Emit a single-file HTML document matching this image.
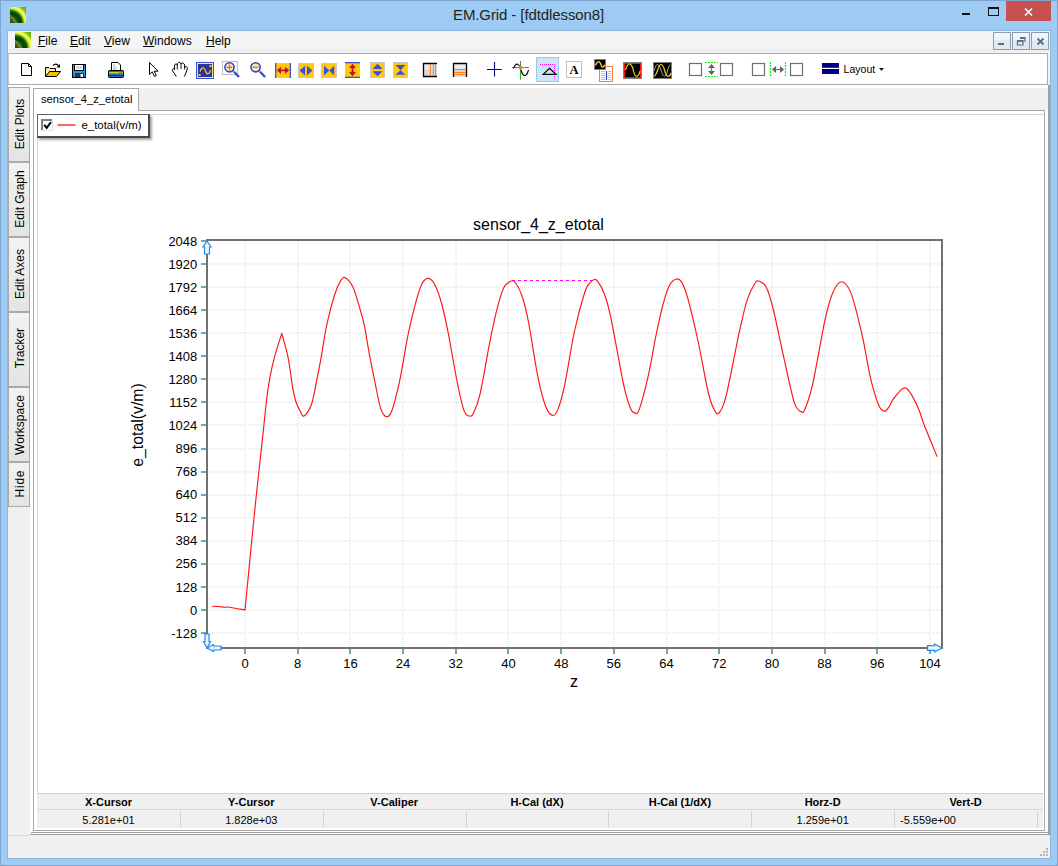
<!DOCTYPE html>
<html><head><meta charset="utf-8">
<style>
*{margin:0;padding:0;box-sizing:border-box}
html,body{width:1058px;height:866px;overflow:hidden}
body{position:relative;background:#9ecbf3;font-family:"Liberation Sans",sans-serif;color:#000}
.a{position:absolute}
.t{position:absolute;white-space:nowrap;line-height:1}
</style></head><body>
<!-- outer frame border -->
<div class="a" style="left:0;top:0;width:1058px;height:866px;border:1px solid #7ea5cb"></div>
<!-- title icon -->

<div class="t" style="left:453px;top:7px;font-size:15px;color:#1f1f1f;letter-spacing:-0.1px">EM.Grid - [fdtdlesson8]</div>
<!-- window buttons -->
<div class="a" style="left:962px;top:13px;width:8px;height:2px;background:#111"></div>
<div class="a" style="left:988px;top:7px;width:11px;height:9px;border:1px solid #111;border-top-width:2px"></div>
<div class="a" style="left:1006px;top:1px;width:45px;height:20px;background:#c75050"></div>
<svg class="a" style="left:1006px;top:1px" width="45" height="20"><path d="M19 7.5 L26 14.5 M26 7.5 L19 14.5" stroke="#fff" stroke-width="1.6"/></svg>

<!-- client area -->
<div class="a" style="left:7px;top:30px;width:1044px;height:829px;background:#8db6dd"></div>
<div class="a" style="left:8px;top:31px;width:1042px;height:827px;background:#f0f0f0"></div>
<!-- menu bar -->
<div class="a" style="left:8px;top:31px;width:1042px;height:18px;background:#f4f5f7"></div>
<div class="a" style="left:8px;top:49px;width:1042px;height:1px;background:#e8e9ea"></div>
<div class="a" style="left:8px;top:50px;width:1042px;height:2px;background:#efefef"></div>
<div class="a" style="left:8px;top:52px;width:1042px;height:1px;background:#f4f4f4"></div>

<div class="t" style="left:38px;top:35px;font-size:12px;color:#000"><u>F</u>ile</div>
<div class="t" style="left:70px;top:35px;font-size:12px;color:#000"><u>E</u>dit</div>
<div class="t" style="left:104px;top:35px;font-size:12px;color:#000"><u>V</u>iew</div>
<div class="t" style="left:143px;top:35px;font-size:12px;color:#000"><u>W</u>indows</div>
<div class="t" style="left:206px;top:35px;font-size:12px;color:#000"><u>H</u>elp</div>
<!-- MDI buttons -->


<!-- toolbar -->
<div class="a" style="left:8px;top:53px;width:1040px;height:32px;border:1px solid #aaa;border-left-color:#c8c8c8;background:#fff"></div>
<!--TOOLS--><svg class="a" style="left:0;top:0" width="1058" height="90">
<defs>
<radialGradient id="sw" cx="0" cy="1" r="1.35">
<stop offset="0" stop-color="#3a3a20"/><stop offset="0.25" stop-color="#4a7a10"/><stop offset="0.42" stop-color="#063c06"/><stop offset="0.55" stop-color="#0a5a0a"/><stop offset="0.68" stop-color="#d8f040"/><stop offset="0.76" stop-color="#ffff60"/><stop offset="0.86" stop-color="#90c810"/><stop offset="1" stop-color="#6aa800"/>
</radialGradient>
<linearGradient id="gg" x1="0" y1="0" x2="0" y2="1"><stop offset="0" stop-color="#f0f0f0"/><stop offset="0.5" stop-color="#e8e8e8"/><stop offset="0.5" stop-color="#d6d6d6"/><stop offset="1" stop-color="#dcdcdc"/></linearGradient>
<linearGradient id="mb" x1="0" y1="0" x2="0" y2="1"><stop offset="0" stop-color="#f4f8fc"/><stop offset="0.45" stop-color="#eaf2fa"/><stop offset="0.5" stop-color="#dde9f6"/><stop offset="1" stop-color="#dfeaf7"/></linearGradient>
</defs>
<rect x="10" y="7" width="16" height="16" fill="url(#sw)"/>
<path d="M10.5 15.5L16 22.5" stroke="#fff" stroke-width="0.9" stroke-dasharray="1 1" opacity="0.8"/>
<rect x="15" y="32" width="16" height="16" fill="url(#sw)"/>
<path d="M15.5 40.5L21 47.5" stroke="#fff" stroke-width="0.9" stroke-dasharray="1 1" opacity="0.8"/>
<rect x="993.5" y="32.5" width="17" height="17" fill="url(#mb)" stroke="#8c9cab"/>
<rect x="1012.5" y="32.5" width="17" height="17" fill="url(#mb)" stroke="#8c9cab"/>
<rect x="1031.5" y="32.5" width="17" height="17" fill="url(#mb)" stroke="#8c9cab"/>
<rect x="998" y="43" width="6" height="2" fill="#5e6e7e"/>
<path d="M1020.5 38.5h4.5v3.5 M1017.5 41h5.5v4h-5.5z" fill="none" stroke="#5e6e7e" stroke-width="1.2"/><rect x="1020" y="37" width="5.5" height="1.8" fill="#5e6e7e"/><rect x="1017" y="40" width="6.5" height="1.8" fill="#5e6e7e"/>
<path d="M1037.5 38.5L1043.5 44.5M1043.5 38.5L1037.5 44.5" stroke="#5e6e7e" stroke-width="1.8"/>
<path d="M21.5 63.5H28.5L31.5 66.5V75.5H21.5Z" fill="#fff" stroke="#000"/><path d="M28.5 63.5V66.5H31.5" fill="none" stroke="#000"/>
<path d="M45.5 76.5V67.5H49L50 68.5H55.5V71" fill="#fff3b0" stroke="#000"/>
<path d="M46.5 68.5h2v1h-2zM48.5 70.5h2v1h-2z" fill="#f8c000"/>
<path d="M45.5 76.5L49.5 71.5H60.5L56.5 76.5Z" fill="#f8c000" stroke="#000"/>
<path d="M53 65.5Q56 62.5 58.6 66" fill="none" stroke="#000" stroke-width="1.1"/><path d="M56.5 67.5H60V64Z" fill="#000"/>
<rect x="72.5" y="64.5" width="13" height="13" fill="#1aa0e8" stroke="#000"/>
<rect x="74.5" y="64.5" width="9" height="6" fill="#fff" stroke="#000"/><rect x="76" y="66" width="6" height="3" fill="#d8d8d8"/>
<rect x="75" y="73" width="9" height="4" fill="#333"/><rect x="80.5" y="74" width="2.5" height="3" fill="#fff"/>
<rect x="73" y="75" width="1.5" height="2" fill="#5050d0"/><rect x="84" y="75" width="1.5" height="2" fill="#5050d0"/>
<path d="M111.5 70.5V62.5H118L120.5 65V70.5" fill="#fff" stroke="#000"/><path d="M113 65h2M113 67h3M113 69h4" stroke="#999" stroke-width="0.8"/>
<rect x="108.5" y="70.5" width="15" height="7" rx="1" fill="#000" stroke="#000"/>
<rect x="109" y="71.5" width="14" height="2.2" fill="#b8e030"/><rect x="119" y="71.5" width="3" height="2.2" fill="#ff5030"/>
<rect x="109" y="73.8" width="14" height="1" fill="#20a0e0"/><rect x="109" y="75.5" width="14" height="1.5" fill="#4060c8"/>
<path d="M149.5 62.5V74.5L152.3 71.8L154.5 76.5L156.3 75.6L154.2 71.2H158Z" fill="#fff" stroke="#000" stroke-linejoin="round"/>
<path d="M176.3 76.5L173 71.5Q171.6 69.2 173.2 68.7Q174 68.5 174.6 69.6V65.2Q175 63.6 176.3 64Q177.2 64.3 177.3 65.3L177.6 63.6Q178.4 62 179.8 62.4Q181 62.8 181 64.1Q182 62.7 183.4 63.2Q184.6 63.8 184.6 65.4L184.7 67.6Q185.5 66.3 186.6 66.7Q187.6 67.3 187.3 68.8L185.5 74L184.3 76.5" fill="#fff" stroke="#000" stroke-width="1" stroke-linejoin="round"/><path d="M177.3 65.3V69.5M181 64.1V69M184.6 65.4V69.5" stroke="#000" stroke-width="0.9"/>
<rect x="196" y="62" width="18" height="17" fill="#3b4fd8"/><rect x="197" y="63" width="16" height="15" fill="#f5e6a0"/><rect x="198" y="64" width="14" height="13" fill="#2a349a"/>
<path d="M200 71.5Q201.5 67.5 203.5 68Q205 68.5 206 72Q207 74.5 208.5 73.5Q210 73 210.5 70" fill="none" stroke="#f8d030" stroke-width="1.3"/>
<rect x="198.5" y="74" width="2" height="2" fill="#f8d030"/><rect x="209.5" y="65" width="2" height="2" fill="#f8d030"/>
<rect x="222.5" y="61.5" width="15" height="13" fill="none" stroke="#c4c4c4" stroke-width="1.2"/>
<path d="M232.8 70.6L239.0 77.1" stroke="#3344cc" stroke-width="2.2"/><path d="M233.1 70.89999999999999L234.5 72.3" stroke="#80d030" stroke-width="1.5"/>
<circle cx="229.5" cy="67.3" r="4.6" fill="#f5e8b8" stroke="#3344cc" stroke-width="1.6"/>
<path d="M226.7 67.3H232.3M229.5 64.5V70.1" stroke="#ff6600" stroke-width="1.2"/>
<path d="M258.9 70.6L265.1 77.1" stroke="#3344cc" stroke-width="2.2"/><path d="M259.2 70.89999999999999L260.6 72.3" stroke="#80d030" stroke-width="1.5"/>
<circle cx="255.6" cy="67.3" r="4.6" fill="#f5e8b8" stroke="#3344cc" stroke-width="1.6"/>
<path d="M252.79999999999998 67.3H258.4" stroke="#ff6600" stroke-width="1.2"/>
<rect x="275" y="63" width="16" height="15" fill="#ffc80a"/><path d="M276 63.5H290M276 77.5H290" stroke="#c8c8c8"/><rect x="275" y="63" width="1.3" height="15" fill="#3c4fd8"/><rect x="289.7" y="63" width="1.3" height="15" fill="#3c4fd8"/>
<path d="M276.8 70.3L281 66.7V69.5H285V66.7L289.2 70.3L285 74V71.2H281V74Z" fill="#c8102e"/>
<rect x="298.5" y="63.5" width="15" height="14" fill="#ffc80a" stroke="#c8c8c8"/><path d="M299.6 70.5L305.1 65.7V75.4Z M312.5 70.5L307 65.7V75.4Z" fill="#3c4fd8"/>
<rect x="321.5" y="63.5" width="15" height="14" fill="#ffc80a" stroke="#c8c8c8"/><path d="M324 65.7V75.4L329.2 70.5Z M334.2 65.7V75.4L329.2 70.5Z" fill="#3c4fd8"/>
<rect x="345" y="62" width="15" height="16" fill="#ffc80a"/><path d="M345.5 63V77M359.5 63V77" stroke="#c8c8c8"/><rect x="345" y="62" width="15" height="1.3" fill="#3c4fd8"/><rect x="345" y="76.7" width="15" height="1.3" fill="#3c4fd8"/>
<path d="M352.5 63.8L356 68H353.5V72H356L352.5 76.2L349 72H351.5V68H349Z" fill="#c8102e"/>
<rect x="370.5" y="62.5" width="14" height="15" fill="#ffc80a" stroke="#c8c8c8"/><path d="M377.5 63.8L382.5 68.9H372.5Z M377.5 76.2L382.5 71.3H372.5Z" fill="#3c4fd8"/>
<rect x="393.5" y="62.5" width="14" height="15" fill="#ffc80a" stroke="#c8c8c8"/><path d="M395.5 65.1H405.4L400.5 70.3Z M395.5 74.7H405.4L400.5 70.3Z" fill="#3c4fd8"/>
<rect x="423" y="63" width="14" height="13.5" fill="url(#gg)"/><rect x="431" y="64" width="6" height="12" fill="#dbe9f3" opacity="0.6"/>
<path d="M437 63.5H423.5V76.5H437" fill="none" stroke="#000" stroke-width="1.3"/><path d="M430.4 64V76M433.3 64V76M435.5 64V76" stroke="#ff8020" stroke-width="1.1"/>
<rect x="453" y="63" width="14" height="14" fill="url(#gg)"/>
<path d="M453.5 77V63.5H466.5V77" fill="none" stroke="#000" stroke-width="1.3"/><path d="M454 69.5H466M454 72.5H466M454 74.5H466" stroke="#ff8020" stroke-width="1.1"/>
<path d="M494.5 62V76.6M487 69.5H501.7" stroke="#000080" stroke-width="1.1"/>
<path d="M520.5 61V79.8M512 67.5H529" stroke="#20b040" stroke-width="1.1"/>
<path d="M513.5 68.5Q515.5 63.5 517.5 64.2Q518.5 64.6 519.5 66M521 70Q522.5 75.5 524.8 75.5Q527 75.5 528.5 70" fill="none" stroke="#000" stroke-width="1.1"/>
<rect x="519" y="66" width="3" height="3" fill="#ff7020"/>
<rect x="536.5" y="57.5" width="22" height="24" fill="#cce4f7" stroke="#99c9ef"/>
<path d="M540 64.5H554.5V78.6" fill="none" stroke="#ff00ff" stroke-width="1" stroke-dasharray="1 1"/>
<path d="M549.5 68.3L556 74.4H543.2Z" fill="none" stroke="#000" stroke-width="1.2" stroke-linejoin="miter"/>
<rect x="566.5" y="61.5" width="15" height="16" fill="#fff" stroke="#c0c0c0"/>
<text x="574" y="74.3" font-family="Liberation Serif" font-weight="bold" font-size="12.5" text-anchor="middle">A</text>
<rect x="599.5" y="66.5" width="13" height="15" fill="#fff" stroke="#ff8030"/>
<path d="M601 71.5h4M601 73.5h4M601 75.5h4M601 77.5h4M601 79.5h4M608 71.5h3.5M608 73.5h3.5M608 75.5h3.5M608 77.5h3.5M608 79.5h3.5" stroke="#b8b8b8" stroke-width="0.9"/><path d="M606.5 71V80" stroke="#3040d0" stroke-width="1.2"/>
<rect x="594.5" y="59.5" width="11" height="10" fill="#000" stroke="#808080"/>
<path d="M595.5 65.5Q597 60.8 599.3 61.8Q600.6 62.6 601.5 66Q602.6 68.6 605 65" fill="none" stroke="#f8d020" stroke-width="1.4"/>
<rect x="623.5" y="62.5" width="18" height="16" fill="#000" stroke="#808080"/><rect x="624.5" y="63.5" width="16" height="14" fill="none" stroke="#ff1010"/>
<path d="M625.5 70Q627 64 629.5 64Q631.5 64 633 69Q634.5 76.3 636.5 76.3Q639 76.3 640 71" fill="none" stroke="#f8e020" stroke-width="1.2"/>
<rect x="653.5" y="62.5" width="18" height="16" fill="#000" stroke="#808080"/>
<path d="M654 71Q655.5 64.5 657.5 64.5Q659.5 64.5 661 70Q662.5 76.3 664.5 76.3Q666.5 76.3 667.5 71Q669 64.5 670.5 65" fill="none" stroke="#a0a0a0" stroke-width="1"/>
<path d="M654.5 76.5Q657 73 658 69Q659.5 64.5 661 64.5Q663 64.5 664.5 70Q666 76.3 668 76.3Q670 76.3 671 73" fill="none" stroke="#f8c820" stroke-width="1.2"/>
<rect x="689.5" y="63.5" width="12" height="12" fill="#fff" stroke="#707070" stroke-width="1.2"/>
<rect x="720.5" y="63.5" width="12" height="12" fill="#fff" stroke="#707070" stroke-width="1.2"/>
<rect x="752.5" y="63.5" width="12" height="12" fill="#fff" stroke="#707070" stroke-width="1.2"/>
<rect x="790.5" y="63.5" width="12" height="12" fill="#fff" stroke="#707070" stroke-width="1.2"/>
<path d="M705 62.5H718M705 76.5H718" stroke="#10f010" stroke-width="1.2" stroke-dasharray="2 1"/>
<path d="M711.5 64L715 68H708Z M711.5 75L715 71H708Z" fill="#606060"/><path d="M711.5 67V72" stroke="#707070" stroke-width="1.2"/>
<path d="M770.5 62V77M785.5 62V77" stroke="#10f010" stroke-width="1.2" stroke-dasharray="2 1"/>
<path d="M772 69.5L776 66V73Z M784 69.5L780 66V73Z" fill="#606060"/><path d="M775 69.5H781" stroke="#707070" stroke-width="1.2"/>
<rect x="822" y="63" width="17" height="4.8" fill="#000080"/><rect x="822" y="69" width="17" height="5" fill="#000080"/>
<text x="843.5" y="72.8" font-family="Liberation Sans" font-size="10.6" fill="#000">Layout</text>
<path d="M879 68H884L881.5 70.8Z" fill="#000"/>
</svg><!--/TOOLS-->

<!-- side tabs -->
<div class="a" style="left:8px;top:85px;width:22px;height:2px;background:#fff"></div>
<div class="a" style="left:8px;top:87px;width:22px;height:420px;background:#a9a9a9"></div>
<div class="a" style="left:9px;top:88px;width:20px;height:73px;background:linear-gradient(#f2f2f2,#e4e4e4)"></div>
<div class="t" style="left:-20.0px;top:117.5px;width:80px;height:12px;font-size:12px;text-align:center;transform:rotate(-90deg)">Edit Plots</div>
<div class="a" style="left:9px;top:163px;width:20px;height:73px;background:linear-gradient(#f2f2f2,#e4e4e4)"></div>
<div class="t" style="left:-20.0px;top:192.5px;width:80px;height:12px;font-size:12px;text-align:center;transform:rotate(-90deg)">Edit Graph</div>
<div class="a" style="left:9px;top:238px;width:20px;height:73px;background:linear-gradient(#f2f2f2,#e4e4e4)"></div>
<div class="t" style="left:-20.0px;top:267.5px;width:80px;height:12px;font-size:12px;text-align:center;transform:rotate(-90deg)">Edit Axes</div>
<div class="a" style="left:9px;top:313px;width:20px;height:73px;background:linear-gradient(#f2f2f2,#e4e4e4)"></div>
<div class="t" style="left:-20.0px;top:342px;width:80px;height:12px;font-size:12px;text-align:center;transform:rotate(-90deg)">Tracker</div>
<div class="a" style="left:9px;top:388px;width:20px;height:73px;background:linear-gradient(#f2f2f2,#e4e4e4)"></div>
<div class="t" style="left:-20.0px;top:418.5px;width:80px;height:12px;font-size:12px;text-align:center;transform:rotate(-90deg)">Workspace</div>
<div class="a" style="left:9px;top:463px;width:20px;height:43px;background:linear-gradient(#f2f2f2,#e4e4e4)"></div>
<div class="t" style="left:-20.0px;top:478px;width:80px;height:12px;font-size:12px;text-align:center;transform:rotate(-90deg);letter-spacing:0.8px;text-indent:0.8px">Hide</div>

<!-- MDI / tab control -->
<div class="a" style="left:30px;top:85px;width:1020px;height:750px;background:#fff;border-right:2px solid #a0a0a0;border-bottom:1px solid #a0a0a0"></div>
<div class="a" style="left:31px;top:832px;width:1017px;height:1px;background:#a0a0a0"></div>
<div class="a" style="left:139px;top:88px;width:909px;height:22px;background:#f0f0f0"></div>
<div class="a" style="left:33px;top:110px;width:1012px;height:721px;border:1px solid #a8a8a8;background:#fff"></div>
<div class="a" style="left:33px;top:88px;width:106px;height:23px;border:1px solid #a8a8a8;border-bottom:none;background:#fff"></div>
<div class="t" style="left:41px;top:94px;font-size:11.2px">sensor_4_z_etotal</div>
<div class="a" style="left:37px;top:114px;width:1007px;height:680px;border-top:1px solid #d4d4d4;border-left:1px solid #d4d4d4"></div>


<!-- chart -->
<!--LEGEND-->
<div class="a" style="left:37px;top:114px;width:113px;height:24px;background:#fff;border-left:1px solid #606060;border-top:1px solid #606060;border-right:2px solid #484848;border-bottom:2px solid #484848;box-shadow:2px 2px 2px rgba(0,0,0,0.35)"></div>
<svg class="a" style="left:0;top:0" width="160" height="145">
<rect x="41" y="119" width="12" height="12" fill="#e4e4e4"/>
<rect x="41" y="119" width="11" height="11" fill="#808080"/>
<rect x="43" y="121" width="9" height="9" fill="#fff"/>
<path d="M44.2 124.8L46.7 127.8L51 122.2" fill="none" stroke="#000" stroke-width="2"/>
<rect x="57.5" y="124" width="18" height="2" fill="#ff6464"/>
</svg>
<div class="t" style="left:81.5px;top:119.8px;font-size:11.4px">e_total(v/m)</div>
<!--/LEGEND-->
<!--CHART--><svg class="a" style="left:0;top:0" width="1058" height="866" font-family="Liberation Sans, sans-serif">
<path d="M245 241V647 M298 241V647 M350 241V647 M403 241V647 M456 241V647 M508 241V647 M561 241V647 M614 241V647 M667 241V647 M719 241V647 M772 241V647 M825 241V647 M877 241V647 M930 241V647 M208 264H941 M208 287H941 M208 310H941 M208 333H941 M208 356H941 M208 379H941 M208 402H941 M208 425H941 M208 449H941 M208 472H941 M208 495H941 M208 518H941 M208 541H941 M208 564H941 M208 587H941 M208 610H941 M208 633H941" stroke="#ececec" stroke-width="2" stroke-dasharray="1 1" fill="none"/>
<path d="M201 241H206 M201 264H206 M201 287H206 M201 310H206 M201 333H206 M201 356H206 M201 379H206 M201 402H206 M201 425H206 M201 449H206 M201 472H206 M201 495H206 M201 518H206 M201 541H206 M201 564H206 M201 587H206 M201 610H206 M201 633H206 M245 649V654 M298 649V654 M350 649V654 M403 649V654 M456 649V654 M508 649V654 M561 649V654 M614 649V654 M667 649V654 M719 649V654 M772 649V654 M825 649V654 M877 649V654 M930 649V654" stroke="#62b0aa" stroke-width="2" fill="none"/>
<path d="M207 240H942V648H207Z" stroke="#727272" stroke-width="2" fill="none"/>
<text x="197.3" y="245.6" font-size="13" text-anchor="end">2048</text>
<text x="197.3" y="268.7" font-size="13" text-anchor="end">1920</text>
<text x="197.3" y="291.7" font-size="13" text-anchor="end">1792</text>
<text x="197.3" y="314.8" font-size="13" text-anchor="end">1664</text>
<text x="197.3" y="337.8" font-size="13" text-anchor="end">1536</text>
<text x="197.3" y="360.9" font-size="13" text-anchor="end">1408</text>
<text x="197.3" y="384.0" font-size="13" text-anchor="end">1280</text>
<text x="197.3" y="407.0" font-size="13" text-anchor="end">1152</text>
<text x="197.3" y="430.1" font-size="13" text-anchor="end">1024</text>
<text x="197.3" y="453.1" font-size="13" text-anchor="end">896</text>
<text x="197.3" y="476.2" font-size="13" text-anchor="end">768</text>
<text x="197.3" y="499.3" font-size="13" text-anchor="end">640</text>
<text x="197.3" y="522.3" font-size="13" text-anchor="end">512</text>
<text x="197.3" y="545.4" font-size="13" text-anchor="end">384</text>
<text x="197.3" y="568.4" font-size="13" text-anchor="end">256</text>
<text x="197.3" y="591.5" font-size="13" text-anchor="end">128</text>
<text x="197.3" y="614.6" font-size="13" text-anchor="end">0</text>
<text x="197.3" y="637.6" font-size="13" text-anchor="end">-128</text>
<text x="245.0" y="667.5" font-size="13" text-anchor="middle">0</text>
<text x="297.7" y="667.5" font-size="13" text-anchor="middle">8</text>
<text x="350.4" y="667.5" font-size="13" text-anchor="middle">16</text>
<text x="403.1" y="667.5" font-size="13" text-anchor="middle">24</text>
<text x="455.8" y="667.5" font-size="13" text-anchor="middle">32</text>
<text x="508.5" y="667.5" font-size="13" text-anchor="middle">40</text>
<text x="561.2" y="667.5" font-size="13" text-anchor="middle">48</text>
<text x="613.8" y="667.5" font-size="13" text-anchor="middle">56</text>
<text x="666.5" y="667.5" font-size="13" text-anchor="middle">64</text>
<text x="719.2" y="667.5" font-size="13" text-anchor="middle">72</text>
<text x="771.9" y="667.5" font-size="13" text-anchor="middle">80</text>
<text x="824.6" y="667.5" font-size="13" text-anchor="middle">88</text>
<text x="877.3" y="667.5" font-size="13" text-anchor="middle">96</text>
<text x="930.0" y="667.5" font-size="13" text-anchor="middle">104</text>
<text x="538.5" y="230" font-size="16" text-anchor="middle">sensor_4_z_etotal</text>
<text x="574" y="687" font-size="16" text-anchor="middle">z</text>
<text transform="translate(142.6 425) rotate(-90)" font-size="15.8" text-anchor="middle">e_total(v/m)</text>
<path d="M512 280.5H594" stroke="#ff00ff" stroke-width="1" stroke-dasharray="3 3"/>
<path d="M211.9 606.2 C213.07 606.25 216.88 606.33 218.9 606.5 C220.92 606.67 222.27 607.08 224.0 607.2 C225.73 607.32 225.80 606.73 229.3 607.2 C232.80 607.67 242.38 609.53 245.0 610.0 C246.80 591.67 252.88 528.58 255.8 500.0 C258.72 471.42 260.70 455.22 262.5 438.5 C264.30 421.78 265.38 409.75 266.6 399.7 C267.82 389.65 268.47 385.37 269.8 378.2 C271.13 371.03 272.60 364.17 274.6 356.7 C276.60 349.23 280.60 337.28 281.8 333.4 C282.87 337.53 286.38 349.12 288.2 358.2 C290.02 367.28 291.40 380.60 292.7 387.9 C294.00 395.20 294.75 398.13 296.0 402.0 C297.25 405.87 298.87 408.77 300.2 411.1 C301.53 413.43 302.12 417.15 304.0 416.0 C305.88 414.85 309.40 410.07 311.5 404.2 C313.60 398.33 315.02 388.45 316.6 380.8 C318.18 373.15 319.27 367.82 321.0 358.3 C322.73 348.78 324.70 334.38 327.0 323.7 C329.30 313.02 332.48 301.42 334.8 294.2 C337.12 286.98 339.17 283.13 340.9 280.4 C342.63 277.67 343.18 276.65 345.2 277.8 C347.22 278.95 350.53 282.10 353.0 287.3 C355.47 292.50 358.12 302.65 360.0 309.0 C361.88 315.35 362.72 317.77 364.3 325.4 C365.88 333.03 367.77 345.57 369.5 354.8 C371.23 364.03 372.83 371.85 374.7 380.8 C376.57 389.75 378.68 402.50 380.7 408.5 C382.72 414.50 384.92 416.50 386.8 416.8 C388.68 417.10 389.98 415.72 392.0 410.3 C394.02 404.88 397.03 392.38 398.9 384.3 C400.77 376.22 401.62 370.32 403.2 361.8 C404.78 353.28 406.25 343.30 408.4 333.2 C410.55 323.10 413.82 309.48 416.1 301.2 C418.38 292.92 420.08 287.32 422.1 283.5 C424.12 279.68 426.18 278.30 428.2 278.3 C430.22 278.30 432.03 279.55 434.2 283.5 C436.37 287.45 438.88 293.87 441.2 302.0 C443.52 310.13 445.50 319.30 448.1 332.3 C450.70 345.30 454.35 367.58 456.8 380.0 C459.25 392.42 461.22 401.03 462.8 406.8 C464.38 412.57 465.15 413.07 466.3 414.6 C467.45 416.13 468.55 416.15 469.7 416.0 C470.85 415.85 471.47 417.40 473.2 413.7 C474.93 410.00 477.35 405.63 480.1 393.8 C482.85 381.97 486.95 356.55 489.7 342.7 C492.45 328.85 494.30 319.78 496.6 310.7 C498.90 301.62 501.17 293.10 503.5 288.2 C505.83 283.30 508.58 282.17 510.6 281.3 C512.62 280.43 513.60 280.27 515.6 283.0 C517.60 285.73 520.45 291.20 522.6 297.7 C524.75 304.20 525.93 308.72 528.5 322.0 C531.07 335.28 535.12 363.27 538.0 377.4 C540.88 391.53 543.35 400.45 545.8 406.8 C548.25 413.15 550.68 415.07 552.7 415.5 C554.72 415.93 555.88 414.60 557.9 409.4 C559.92 404.20 562.05 397.28 564.8 384.3 C567.55 371.32 571.08 346.80 574.4 331.5 C577.72 316.20 582.12 300.58 584.7 292.5 C587.28 284.42 588.30 285.17 589.9 283.0 C591.50 280.83 593.00 279.78 594.3 279.5 C595.60 279.22 596.12 279.13 597.7 281.3 C599.28 283.47 601.63 286.58 603.8 292.5 C605.97 298.42 607.38 301.35 610.7 316.8 C614.02 332.25 620.38 369.92 623.7 385.2 C627.02 400.48 628.72 403.88 630.6 408.5 C632.48 413.12 633.55 412.75 635.0 412.9 C636.45 413.05 637.02 415.90 639.3 409.4 C641.58 402.90 645.98 385.88 648.7 373.9 C651.42 361.92 653.30 348.75 655.6 337.5 C657.90 326.25 660.20 315.05 662.5 306.4 C664.80 297.75 667.08 290.17 669.4 285.6 C671.72 281.03 674.37 279.58 676.4 279.0 C678.43 278.42 679.73 278.98 681.6 282.1 C683.47 285.22 684.87 287.88 687.6 297.7 C690.33 307.52 694.53 325.12 698.0 341.0 C701.47 356.88 705.52 381.23 708.4 393.0 C711.28 404.77 713.37 408.50 715.3 411.6 C717.23 414.70 718.12 414.57 720.0 411.6 C721.88 408.63 723.33 407.30 726.6 393.8 C729.87 380.30 736.13 346.33 739.6 330.6 C743.07 314.87 744.80 307.33 747.4 299.4 C750.00 291.47 753.22 286.02 755.2 283.0 C757.18 279.98 757.45 280.58 759.3 281.3 C761.15 282.02 763.98 282.68 766.3 287.3 C768.62 291.92 770.32 297.45 773.2 309.0 C776.08 320.55 780.13 341.17 783.6 356.6 C787.07 372.03 791.12 392.43 794.0 401.6 C796.88 410.77 799.03 410.45 800.9 411.6 C802.77 412.75 803.18 413.33 805.2 408.5 C807.22 403.67 809.68 397.45 813.0 382.6 C816.32 367.75 821.78 334.42 825.1 319.4 C828.42 304.38 830.15 298.77 832.9 292.5 C835.65 286.23 838.57 281.65 841.6 281.8 C844.63 281.95 847.78 284.98 851.1 293.4 C854.42 301.82 859.13 322.70 861.5 332.3 C863.87 341.90 863.72 343.03 865.3 351.0 C866.88 358.97 868.83 371.22 871.0 380.1 C873.17 388.98 876.15 399.10 878.3 404.3 C880.45 409.50 882.15 410.82 883.9 411.3 C885.65 411.78 887.18 409.30 888.8 407.2 C890.42 405.10 891.18 401.87 893.6 398.7 C896.02 395.53 900.60 389.28 903.3 388.2 C906.00 387.12 907.23 388.70 909.8 392.2 C912.37 395.70 916.28 403.68 918.7 409.2 C921.12 414.72 921.22 417.37 924.3 425.3 C927.38 433.23 935.05 451.55 937.2 456.8" stroke="#ff1414" stroke-width="1.15" fill="none" stroke-linejoin="round"/>
<path d="M207 241 L211 247 L209.5 247 L209.5 254 L204.5 254 L204.5 247 L203 247 Z" stroke="#1e8cff" stroke-width="1.2" fill="#f4f0ec"/>
<path d="M942 648 L934.5 652 L934.5 650.3 L927.5 650.3 L927.5 645.7 L934.5 645.7 L934.5 644 Z" stroke="#1e8cff" stroke-width="1.2" fill="#f4f0ec"/>
<path d="M207 648 L203.5 641.5 L205 641.5 L205 634 L209 634 L209 641.5 L210.5 641.5 Z" stroke="#1e8cff" stroke-width="1.2" fill="#f0f0f0"/>
<path d="M207 648 L213.5 644.5 L213.5 646 L221 646 L221 650 L213.5 650 L213.5 651.5 Z" stroke="#1e8cff" stroke-width="1.2" fill="#f0f0f0"/>
</svg><!--/CHART-->

<!-- status table -->
<div class="a" style="left:37px;top:793px;width:1006px;height:35px;background:#f0f0f0;border-top:1px solid #d0d0d0"></div>
<div class="a" style="left:37px;top:809px;width:1006px;height:1px;background:#d6d6d6"></div>
<div class="t" style="left:37.0px;top:797px;width:143px;text-align:center;font-size:11px;font-weight:bold">X-Cursor</div>
<div class="t" style="left:37.0px;top:815px;width:143px;text-align:center;font-size:11px">5.281e+01</div>
<div class="a" style="left:180px;top:811px;width:1px;height:16px;background:#d0d0d0"></div>
<div class="t" style="left:179.8px;top:797px;width:143px;text-align:center;font-size:11px;font-weight:bold">Y-Cursor</div>
<div class="t" style="left:179.8px;top:815px;width:143px;text-align:center;font-size:11px">1.828e+03</div>
<div class="a" style="left:323px;top:811px;width:1px;height:16px;background:#d0d0d0"></div>
<div class="t" style="left:322.7px;top:797px;width:143px;text-align:center;font-size:11px;font-weight:bold">V-Caliper</div>
<div class="a" style="left:466px;top:811px;width:1px;height:16px;background:#d0d0d0"></div>
<div class="t" style="left:465.5px;top:797px;width:143px;text-align:center;font-size:11px;font-weight:bold">H-Cal (dX)</div>
<div class="a" style="left:608px;top:811px;width:1px;height:16px;background:#d0d0d0"></div>
<div class="t" style="left:608.4px;top:797px;width:143px;text-align:center;font-size:11px;font-weight:bold">H-Cal (1/dX)</div>
<div class="a" style="left:751px;top:811px;width:1px;height:16px;background:#d0d0d0"></div>
<div class="t" style="left:751.2px;top:797px;width:143px;text-align:center;font-size:11px;font-weight:bold">Horz-D</div>
<div class="t" style="left:751.2px;top:815px;width:143px;text-align:center;font-size:11px">1.259e+01</div>
<div class="a" style="left:894px;top:811px;width:1px;height:16px;background:#d0d0d0"></div>
<div class="t" style="left:894.1px;top:797px;width:143px;text-align:center;font-size:11px;font-weight:bold">Vert-D</div>
<div class="t" style="left:900px;top:815px;font-size:11px">-5.559e+00</div>
<div class="a" style="left:1037px;top:811px;width:1px;height:16px;background:#d0d0d0"></div>
<div class="a" style="left:1046px;top:848px;width:2px;height:2px;background:#b4b4b4"></div>
<div class="a" style="left:1043px;top:851px;width:2px;height:2px;background:#b4b4b4"></div>
<div class="a" style="left:1046px;top:851px;width:2px;height:2px;background:#b4b4b4"></div>
<div class="a" style="left:1040px;top:854px;width:2px;height:2px;background:#b4b4b4"></div>
<div class="a" style="left:1043px;top:854px;width:2px;height:2px;background:#b4b4b4"></div>
<div class="a" style="left:1046px;top:854px;width:2px;height:2px;background:#b4b4b4"></div>
<div class="a" style="left:8px;top:835px;width:22px;height:1px;background:#dadada"></div>
</body></html>
